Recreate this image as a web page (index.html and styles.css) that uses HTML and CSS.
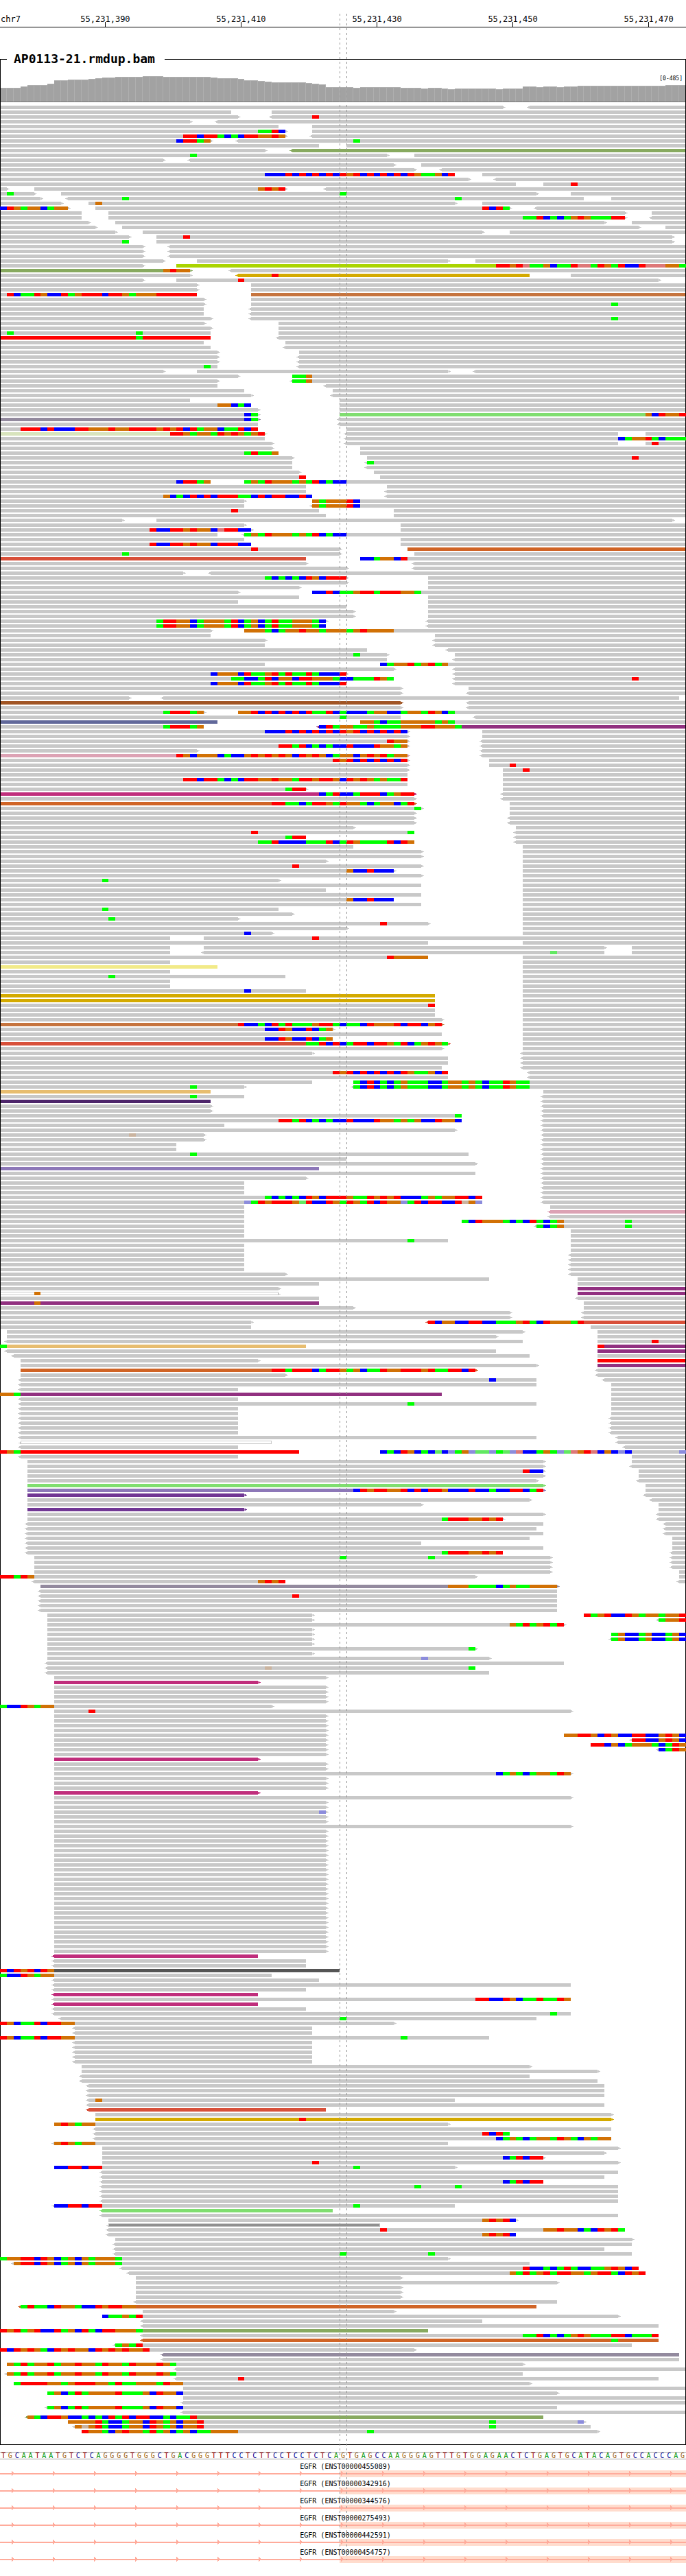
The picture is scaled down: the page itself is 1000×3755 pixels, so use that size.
FILE: index.html
```html
<!DOCTYPE html>
<html lang="en">
<head>
<meta charset="utf-8">
<title>AP0113-21.rmdup.bam - chr7:55,231,375-55,231,475</title>
<link rel="stylesheet" href="styles.css">
</head>
<body>
<svg class="defs" aria-hidden="true">
  <defs>
    <pattern id="strand" width="60" height="10" patternUnits="userSpaceOnUse">
      <path d="M0 4H60V6H0Z M17 1H18V2H19V3H20V6H19V7H18V8H17Z" fill="#ffab9b"/>
    </pattern>
  </defs>
</svg>
<main class="browser">
  <header class="ruler bases">
    <span class="chromosome">chr7</span>
    <span class="mark m390">55,231,390</span>
    <span class="mark m410">55,231,410</span>
    <span class="mark m430">55,231,430</span>
    <span class="mark m450">55,231,450</span>
    <span class="mark m470">55,231,470</span>
  </header>

  <fieldset class="track">
    <legend>AP0113-21.rmdup.bam</legend>
    <div class="lane">
      <div class="coverage">
        <div class="bars bases" id="coverage"></div>
        <span class="range">[0-485]</span>
      </div>
      <div class="reads" id="reads"></div>
    </div>
  </fieldset>

  <div class="sequence bases" id="sequence"></div>

  <section class="transcripts">
    <div class="transcript"><span>EGFR (ENST00000455089)</span><svg class="band"><rect width="100%" height="10" fill="url(#strand)"/></svg></div>
    <div class="transcript"><span>EGFR (ENST00000342916)</span><svg class="band"><rect width="100%" height="10" fill="url(#strand)"/></svg></div>
    <div class="transcript"><span>EGFR (ENST00000344576)</span><svg class="band"><rect width="100%" height="10" fill="url(#strand)"/></svg></div>
    <div class="transcript"><span>EGFR (ENST00000275493)</span><svg class="band"><rect width="100%" height="10" fill="url(#strand)"/></svg></div>
    <div class="transcript"><span>EGFR (ENST00000442591)</span><svg class="band"><rect width="100%" height="10" fill="url(#strand)"/></svg></div>
    <div class="transcript"><span>EGFR (ENST00000454757)</span><svg class="band"><rect width="100%" height="10" fill="url(#strand)"/></svg></div>
  </section>

  <div class="guide guide-start"></div>
  <div class="guide guide-end"></div>
</main>
<script src="reads.js"></script>
</body>
</html>
```
FILE: styles.css
```css
* {
  box-sizing: border-box;
}

body {
  margin: 0;
  background: #fff;
  color: #000;
  font-family: "DejaVu Sans Mono", monospace;
}

.defs {
  position: absolute;
  width: 0;
  height: 0;
}

.browser {
  position: relative;
  padding-bottom: 15px;
  overflow: hidden;
}

/* One column for each base in view. */
.bases {
  display: grid;
  grid-template-columns: repeat(101, minmax(0, 1fr));
}

/* Ruler */
.ruler {
  padding-top: 21px;
  border-bottom: 1px solid #000;
  font-size: 12px;
  line-height: 14px;
}

.chromosome {
  grid-area: 1 / 1 / 2 / 6;
  padding-left: 1px;
}

.mark {
  display: flex;
  flex-direction: column;
  align-items: center;
  white-space: nowrap;
}

.mark::after {
  content: "";
  width: 1px;
  height: 7px;
  margin-top: -3px;
  background: #000;
}

.m390 { grid-area: 1 / 11 / 2 / 22; }
.m410 { grid-area: 1 / 31 / 2 / 42; }
.m430 { grid-area: 1 / 51 / 2 / 62; }
.m450 { grid-area: 1 / 71 / 2 / 82; }
.m470 { grid-area: 1 / 91 / 2 / 102; }

/* Alignment track */
.track {
  min-width: 0;
  margin: 35px 0 0;
  padding: 0 0 14px;
  border: 1px solid #000;
}

.track legend {
  margin-left: 9px;
  padding: 0 14px 0 10px;
  font-size: 18px;
  font-weight: bold;
  line-height: 22px;
}

.lane {
  position: relative;
  margin: 0 -1px;
}

.lane::after {
  content: "";
  position: absolute;
  inset: 0;
  border: solid #000;
  border-width: 0 1px;
  pointer-events: none;
}

.coverage {
  position: relative;
  height: 52px;
  border-bottom: 1px solid #777;
}

.bars {
  height: 100%;
  align-items: end;
}

.bars i {
  background: #a2a2a2;
  border: solid #afafaf;
  border-width: 1px 1px 0 0;
}

.range {
  position: absolute;
  top: 13px;
  right: 5px;
  font-size: 8px;
  line-height: 10px;
}

.reads {
  display: flex;
  flex-direction: column;
  gap: 2px;
  padding: 5px 0 2px;
}

.row {
  height: 5px;
}

.read,
.diff {
  grid-row: 1;
  background: var(--c);
}

.read {
  --c: #c8c8c8;
  position: relative;
}

.forward::after,
.reverse::before {
  content: "";
  position: absolute;
  top: 0;
  width: 4px;
  height: 5px;
  background: var(--c);
  clip-path: polygon(0 1px, 2px 1px, 2px 2px, 4px 2px, 4px 3px, 2px 3px, 2px 4px, 0 4px);
}

.forward::after {
  left: 100%;
}

.reverse::before {
  right: 100%;
  transform: scaleX(-1);
}

.diff {
  z-index: 1;
}

/* Insert-size and mate-chromosome colours */
.A { --c: #88aa60; }
.B { --c: #61689a; }
.C { --c: #c6743e; }
.D { --c: #4e266b; }
.E { --c: #f2ea88; }
.G { --c: #c02e7c; }
.H { --c: #555555; }
.J { --c: #713794; }
.K { --c: #d8e4bd; }
.L { --c: #80de70; }
.M { --c: #d4aa00; }
.N { --c: #dca2b4; }
.O { --c: #d06426; }
.P { --c: #938a9e; }
.R { --c: #ff0000; }
.S { --c: #e7bd70; }
.T { --c: #d8503a; }
.U { --c: #8d78b8; }
.V { --c: #913080; }
.W { --c: #a15524; }
.Y { --c: #aad400; }

.Z {
  background: #fff;
  border: 1px solid #c8c8c8;
}

.Q {
  background: #909090;
  border: 1px solid #c0c0c0;
}

/* Mismatched bases; the pale ones have low quality */
.r { --c: #ff0000; }
.g { --c: #00ff00; }
.b { --c: #0000ff; }
.o { --c: #d17105; }
.p { --c: #dd7878; }
.l { --c: #62e862; }
.v { --c: #8c8cdc; }
.t { --c: #cab4a0; }

/* Reference sequence */
.sequence {
  height: 11px;
  margin-top: 10px;
  border: solid #a0a0a0;
  border-width: 1px 0;
  font-size: 10px;
  line-height: 9px;
  text-align: center;
}

.base-A { color: #009600; }
.base-C { color: #000096; }
.base-G { color: #a06414; }
.base-T { color: #a00000; }

/* Transcripts */
.transcripts {
  display: flex;
  flex-direction: column;
  gap: 4px;
  margin-top: 5px;
}

.transcript {
  display: flex;
  flex-direction: column;
  padding-left: 7px;
  margin-left: -7px;
  font-size: 10px;
  line-height: 11px;
  text-align: center;
}

.transcript span {
  padding-left: 7px;
}

.band {
  display: block;
  width: 100%;
  height: 10px;
  background: linear-gradient(to right, transparent calc(100% * 50 / 101), #ffdccd 0);
}

/* Edges of the centre base */
.guide {
  position: absolute;
  top: 20px;
  bottom: 20px;
  z-index: 2;
  width: 1px;
  background: repeating-linear-gradient(#969696 0 3px, transparent 3px 7px);
}

.guide-start { left: calc(100% * 50 / 101); }
.guide-end { left: calc(100% * 51 / 101); }
```
FILE: reads.js
```js
// One line per row. "a-b" is a read over bases a to b, "<" and ">" give its
// strand, a capital its colour; "a:xyz" lists mismatches from base a on.
// "n*" repeats the row.
const ROWS = `
-74> <78-
-34 40-
-35> <40- 46:r
-28> <32-
-41 46-
-42> 38:ggrb 46-
-42> 27:rrbrrgbgbrrooro <46-
-31> 26:brrgo <35- 52:g
-47 51-
-39> <43-A
-57> 28:g 61-
-24> <28-
-58> 62-
-61> <65-
-67 39:bbbrbrbrbrbrorbrbrbrbroggobr 71-
-69> <73-
-76 80- 84:r
-1> 5-42> 38:oror <48-
-5> 1:g 9-79> 50:g 84-
-6> <10-86 18:g 67:g 90-
-9> 13-67> 14:o 71-
-10> 0:brogoobgoo 14-75> 71:rbrg <79-
-12 16-92> 96-
-12 16-92> 77:ggrbgbgorogggrr <96-
-13> 17-89> 93-
-14> 18-94> 98-
-17> 21-71> 75-
-19> 23-99> 27:r
-19 18:g 23-99>
3* -21> <25-
-24> 29-66> 70-
-21> 26-Y 73:rrorpggobggrppgrogrbbrpppoog
-28>A 24:oroo <34-
-28> <35-78M 40:r 84-
-21> 26-97> 35:r
2* -29> 37-
-29 1:rbggrobbrgorrrbrrogooorrrrrr 37-C
-30> 37-
-30> 37- 90:g
2* -30 <37-
-31> <37- 90:g
-30> 41-
-31> 41-
-31 1:g 20:g 41-
-31R 20:g <41-
-30 42-
-31 <42-
-32> 44-
2* -32> <44-
-32 30:g <44-
-24> 29-66> <70-
-35> 43- 43:ggo
-32> <43- 43:ggo
-32 <48-
-36 49-
-37> <49-
-28 50-
-37 32:oobgb 50-
-38> 50-
-38> 36:bg 50-L 95:obroor
-38>P 36:bg <50-
-38 <50-
-38 3:rrrbrbbbrroooroorrrrororbrgoobggrbr 51-
-39>K 25:rrogoogrorogor <51-91 95-
-39 <51- 91:bgoorgbggg
-40> <51-91 95- 96:r
-40> 53-
-41 36:grggo 53-
-43> 54- 93:r
-43 <54- 54:g
-43 <54-
-44> 55-
-45 44:r 56-
-31 26:brrgo 36- 36:gogrooogogrbgbb
-45 57-
-45 <57-
-46 24:obgbrbrbrrrggbrbrrbbrb <57-
-36> 46- 46:ogooorb
-36 <46- 46:ogooorb
-47 34:r 58-
-48 58-
-18> 23-99>
-36> 59-
-37> 22:rbbrroroobprrbb 59-
-32 <36- 36:gogrooogogrbgbb
-36 59-
-37 22:rbbrroroobrrrbb 59-
-50> 37:r 60-O
-50> 18:g 61-
-45T 53- 53:bbgoobr
-45> <61-
-51> <61-
-27> <31-
-51> 39:gbgbgbrobrrr 63-
-51> 63-
-44> 63-
-35> 46- 46:bbrbggorrgrrroog
-44 63-
-35 63-
-51 63-
2* -52> 63-
-48> 23:grroobgooogrbgobgrggooogb <63-
-48 23:grroobgooogrbgobgrggooogb <63-
-31> 36- 36:ooogbgooroogooogoroooo
-31 64-
-39> <64-
-39 <64-
-54 <66-
-57> 52:g 67-
-57 <67-
-39 56- 56:bgoorgorgo
-58> <67-
-51> 31:booobrggorgrggrgbbbr <67-
-58 34:ggbbgrboobrrooogbbgggrog <67- 93:r
-51 31:booobrggorgrggrgbbbr <67-
-59> 69-
-59> <69-
-19> <24-100
-59>W <69-
-59> <69-
-30> 24:grrrgo 35- 35:oorbrbrbrbrggrbgbbbgoobbgoogrobg
-59 50:g <70-
-32B 53- 53:oogbggooooogog
-30 24:grrrgo <47-V 47:brgooggoggggooorrooog
-60> 39:bbbrbrbrbrbrorbrbrbrb 71-
-60> 71-
-60> 57:roo <71-
-60> 41:rrgrbgbgbbrbbbroogo <71-
-29> <71-
-60>N 26:robooobgbborororobrorobgoobororgoo <71-
-60> 49:rorbrbrbrbr 72-
-60> 72- 75:r
-60> 74- 77:r
-60 74-
-60 27:rrbrrgbgbrrooroogrrorrobrorogoggr 74-
-60 74-
-45> 42:grr 74-
-61>G 47:bgrbbgrrrbgorr <74-
-61> <74-
-61>O 40:rrggbgrrogroogbgoobgr 75-
-62> 61:g 75-
-61> 75-
2* -61> <75-
-52> 76-
-61 37:r 60:g <76-
-45 42:grr <76-
-61 38:ggrbbbbgggrbgroggggrbro <76-
-52 77-
2* -62> 77-
-48> 77-
-62> 43:r 77-
-58> 51:obbrbbb 77-
-62> 77-
-41> 15:g 77-
-62 77-
-48 77-
-62 77-
-58 51:obbrbbb 77-
-62 77-
-41 15:g 77-
-43> 77-
-35> 16:g 77-
-63> 56:r 77-
-51> 77-
-40> 36:b 77-
-25 30- 46:r
-63 77-
-25 30-89> 93-
-25 <30-89 81:l 93-
-63 57:rooooo 77-
-25 77-
-32E 77-
-25 77-
-42 16:g 77-
2* -25 77-
-45 36:b 77-
2* -64M 77-
-64 63:r 77-
2* -64 77-
-65> 77-
-65>C 35:rbbgbrgrgggorrgbggbrooorbrrbor 77-
-49> 39:bbrobbrbgo 77-
-65 77-
-49 39:bbrobbrbgo 77-
-66>T 45:ggrbrbgrrbrrogrbgorog 77-
-65> 77-
-46> <77-
2* -66 <77-
-65 <77-
-66 49:rorbrbrbrbroggobr <78-
-66 <78-
-46 52- 52:gbrbgbgogggbbgoogogbggrogg
-36> 28:g <52- 52:gbrbgbgogggbbgoogogbggrogg
-31S 80-
-36 28:g <80-
-31D <80-
2* -31> <80-
-68 67:g <80-
-68 41:rrgrbgbgbbrbbbroogogobbroob <80-
-33 <80-
-67> <80-
-30> 19:t <80-
-30> <80-
2* -26 <80-
-69 28:g <80-
-51 <80-
-70> <80-
-47U <80-
-70 <80-
-45> <80-
3* -36 <80-
-71 39:gbgbgbrobrrroggrororbbbgogoorrbr <80-
-71 36:vgrorrrolrbbrogrogrbroovgrbrrbbrtov <80-
-36 81-
-36 <81-N
-36 <81-
-36 68- 68:gbrooogbgbrgbgo 92:g
-36 <79- 79:gbgo 92:g
2* -36 84-
-66 60:g 84-
2* -36 84-
4* -36 <84-
-42> <84-
-72 85-
-47 85-
-41> 85-V
-41>Z 5:o 85-V
-47 <85-
-47V 5:o 86-
-52> 86-
2* -75> <86-
-37> <63-T 63:rboobbrrbbgggorgbrooogr
-37 87-
1-77> 88-
1-73> 88-
<1-77 88- 96:r
-45S 0:g 88-V 88:r
<1-73 88-V
<2-78 88-
3-38> 88-R
3-79> 88-V
3-70>O 40:rrgrrrbgrrogobggroorrrorggrrbr <88-
3-42> <88-
<3-79 72:b <89-
<3-79 90-
<3-35 90-
-65V 0:oog 90-
<3-35 90-
<3-79 60:g 90-
2* <3-35 90-
4* <3-35 <90-
<3-79 <91-
<3-40Z <91-
<3-35 <92-
-44R 0:rog 56- 56:bgbrobgblbvgovllvglvpbbgogvlporpbobvb 100:v
<3-35 93-
4-80> 93-
4-80> <93-
4-80> 77:rbb 94-
4-80> 94-
4-79> <94-
4-80>L 95-
4-80>U 52:brorroorbrbrrobbbrbbgbbrrbgr 95-
4-36>J <95-
4-78> <96-
4-62> 97-
4-36>J 97-
4-80> <97-
4-74> 65:grrrooror <97-
<4-80 <98-
<4-79 <98-
<4-80 <98-
<4-78 99-
<4-62 99-
<4-80 99-
<4-74 65:grrrooror <99-
5-81> 50:g 63:g <99-
2* 5-81> <99-
5-81> 100-
-70> 0:rrgro 100-
<5-42 38:oror <100-
6-82>P 66:oooggggbgoggoooo
<6-82
<6-82 43:r
3* <6-82
7-46> 86- 86:rgorbbrogoogoor
7-46> <97- 97:goor
7-83> 75:ogrgorgr
7-46>
7-46> 90- 90:gobbgobbgob
7-46> <90- 90:gobbgobbgob
7-46>
7-70> 69:g
7-46>
7-72> 62:v
<7-83
<7-70 39:t 69:g
<7-72
8-48>
8-38>G
4* 8-48>
-40> 0:gbbrogoo
8-84> 13:r
4* 8-48>
8-48> 83- 83:oorrobrobbrrbborob
8-48> <93- 93:rrbborob
8-48> 87- 87:rrbobgooogbgro
8-48> <97- 97:bgro
8-48>
8-38>G
2* 8-48>
8-84> 73:bgogbgoogro
3* 8-48>
8-38>G
8-84>
2* 8-48>
8-48> 47:v
2* 8-48>
8-84>
26* 8-48>
<8-38G
2* <8-45
-50H 0:rbrorbro
-40 0:gbbrogoo
<8-47
<8-84
<8-45
<8-38G
<8-84 70:rrbbrobggrggro
<8-38G
<8-45
<8-84 81:g
<9-79 50:g
-58> 0:robggrbrroo
2* <11-46
-72 0:robggrbrroo 59:g
5* <11-46
12-78>
12-88>
<12-78
<12-88
3* <13-89
<13-67 14:o
<13-89
<13-48T
14-90>
14-90>M 44:r
8-66> 8:orogoo
<14-90
<14-75 71:rbrg
<14-90 73:bgogbgoogrogbogoo
<8-66 8:orogoo
15-91>
15-89>
15-80> 74:bgrbrr
15-91> 46:r
8-67> 8:bbrrbrr 52:g
<15-91
<15-89
<15-80 74:bgrbrr
<15-91 61:g 67:g
3* <15-91
<8-67 8:bbrrbrr 52:g
<15-49L
<15-91
16-76> 71:ororb
<16-56Q
<16-92 56:r 80:ooroobgbrorg
<16-76 71:ororb
17-93>
<17-93
<17-89
<17-93 50:g 63:g
-66> 0:goorrbrobgobogooog
<2-78 2:orrbrobgobogooog
<18-94 77:rbbgbgrgbbggorobr
<19-95 75:ogrgorgrroogorrgbror
20-59>
20-82>
3* 20-59>
<20-82
<3-79O 3:grggbroogbbrorroo
21-58>
15-91> 15:bggogr
<21-71
<21-97
-63A 0:rorgorbbrgobrgbrrooog
<21-97 77:ggrbgbgorogggrrbgggr
<21-97O 90:g
<17-93 17:gogr
-61> 0:rbrorogbroroobrororoor
<24-100P
<24-100
1-77> 1:ogrgoorgooroogroogrooorog
<26-
<1-77 1:ogrgoorgooroogroogrooorog
<26-97 35:r
2-78> 2:grrrroogorrroogrggooogroo
27-
7-82> 7:gobgrgoooorgggobroob
27-
<27-
<7-82 7:gobgrgoooorgggobroob
<27-
<4-80A 4:ogbrrobbgbgbrgrbrrbbgbggr
10-86> 10:oooorgbbgoobrogoboor 72:g 85:v
<11-87 11:otorgbbgoobrogoboor 72:g
12-88> 12:roogboroogrgobgobggoooo 54:g`;

// [number of bases, bar height]
const COVERAGE = [
  [3, 20], [1, 22], [3, 24], [1, 26], [2, 31], [3, 32], [1, 33], [1, 34],
  [2, 35], [4, 36], [3, 37], [7, 36], [1, 35], [3, 34], [1, 33], [2, 31],
  [1, 30], [1, 29], [5, 28], [1, 27], [1, 26], [1, 25], [4, 21], [1, 20],
  [6, 21], [3, 20], [1, 19], [2, 20], [1, 19], [1, 18], [6, 19], [1, 18],
  [3, 19], [2, 22], [1, 21], [2, 22], [1, 21], [2, 22], [13, 23], [3, 24],
];

const SEQUENCE =
  "TGCAATAATGTCTCAGGGGTGGGCTGACGGGTTTCCTCTTCCTCCTCTCAG" +
  "TGAGCCAAGGGAGTTTGTGGAGAACTCTGAGTGCATACAGTGCCACCCAG";

function add(parent, tag, className, text) {
  const el = document.createElement(tag);
  el.className = className;
  if (text) el.textContent = text;
  parent.append(el);
  return el;
}

function span(row, className, from, to) {
  add(row, "i", className).style.gridColumn = `${from + 1} / ${to + 1}`;
}

const bars = document.getElementById("coverage");
for (const [count, height] of COVERAGE) {
  for (let i = 0; i < count; i++) add(bars, "i", "").style.height = `${height}px`;
}

const sequence = document.getElementById("sequence");
for (const base of SEQUENCE) add(sequence, "span", `base-${base}`, base);

const reads = document.getElementById("reads");
for (const line of ROWS.trim().split("\n")) {
  const [, times, body] = line.match(/^(?:(\d+)\* )?(.*)$/);
  for (let n = 0; n < (Number(times) || 1); n++) {
    const row = add(reads, "div", "row bases");
    for (const token of body.split(" ")) {
      const read = token.match(/^(<?)(\d*)-(\d*)(>?)([A-Z]?)$/);
      if (read) {
        const [, reverse, from, to, forward, colour] = read;
        const names = `read ${reverse ? "reverse" : ""} ${forward ? "forward" : ""} ${colour}`;
        span(row, names, Number(from), to ? Number(to) : 101);
        continue;
      }
      const [start, letters] = token.split(":");
      let at = Number(start);
      for (const run of letters.match(/(.)\1*/g)) {
        span(row, `diff ${run[0]}`, at, at + run.length);
        at += run.length;
      }
    }
  }
}
```
